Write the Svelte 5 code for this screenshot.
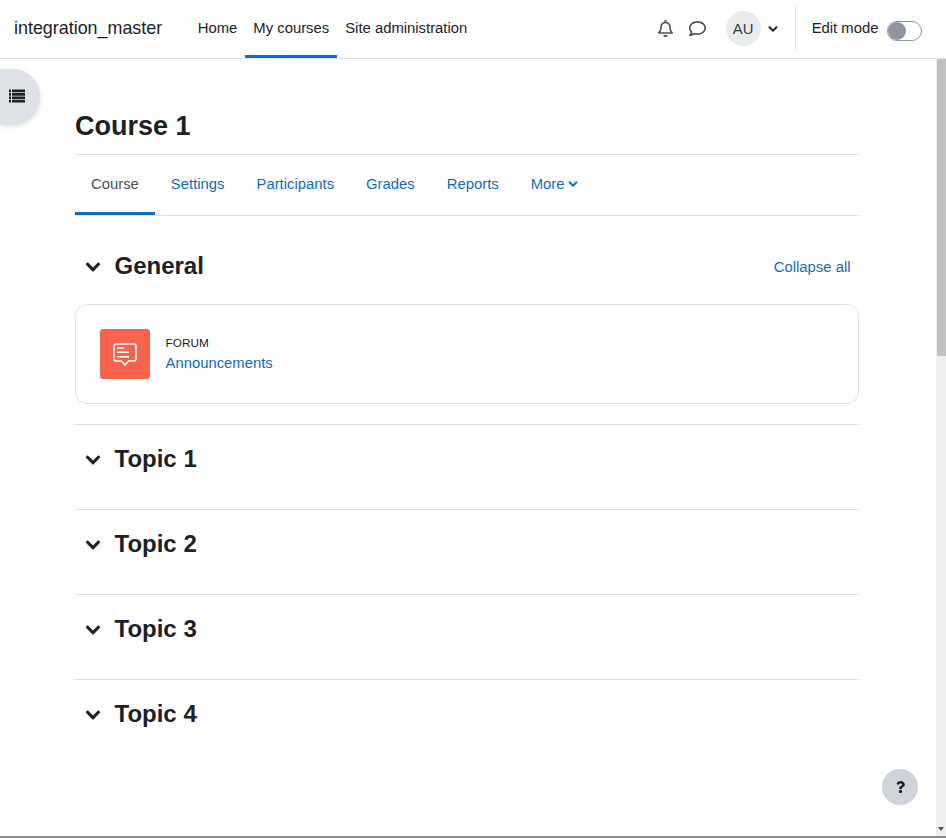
<script lang="ts">
  const navItems = ["Home", "My courses", "Site administration"];
  const tabs = ["Course", "Settings", "Participants", "Grades", "Reports"];
  const topics = ["Topic 1", "Topic 2", "Topic 3", "Topic 4"];
</script>

{#snippet chevron(size: number)}
  <svg class="chevron" width={size} height={size} viewBox="0 0 448 512" aria-hidden="true">
    <path fill="currentColor" stroke="currentColor" stroke-width="28" d="M207.029 381.476L12.686 187.132c-9.373-9.373-9.373-24.569 0-33.941l22.667-22.667c9.357-9.357 24.522-9.375 33.901-.04L224 284.505l154.745-154.021c9.379-9.335 24.544-9.317 33.901.04l22.667 22.667c9.373 9.373 9.373 24.569 0 33.941L240.971 381.476c-9.373 9.372-24.569 9.372-33.942 0z" />
  </svg>
{/snippet}

<div class="window">
  <header class="navbar">
    <span class="brand">integration_master</span>
    <nav class="primary">
      {#each navItems as item}
        <span class="nav-item" class:active={item === "My courses"}>{item}</span>
      {/each}
    </nav>
    <div class="usernav">
      <svg class="bell" width="15" height="17" viewBox="0 0 448 512" aria-hidden="true">
        <path fill="#495057" d="M439.39 362.29c-19.32-20.76-55.47-51.99-55.47-154.29 0-77.7-54.48-139.9-127.94-155.16V32c0-17.67-14.32-32-31.98-32s-31.98 14.33-31.98 32v20.84C118.56 68.1 64.08 130.3 64.08 208c0 102.3-36.15 133.53-55.47 154.29-6 6.45-8.66 14.16-8.61 21.71.11 16.4 12.98 32 32.1 32h383.8c19.12 0 32-15.6 32.1-32 .05-7.55-2.61-15.27-8.61-21.71zM67.53 368c21.22-27.97 44.42-74.33 44.53-159.42 0-.2-.06-.38-.06-.58 0-61.86 50.14-112 112-112s112 50.14 112 112c0 .2-.06.38-.06.58.11 85.1 23.31 131.46 44.53 159.42H67.53zM224 512c35.32 0 63.97-28.65 63.97-64H160.03c0 35.35 28.65 64 63.97 64z" />
      </svg>
      <svg class="chat" width="17" height="17" viewBox="0 0 512 512" aria-hidden="true">
        <path fill="#495057" d="M256 32C114.6 32 0 125.1 0 240c0 47.6 19.9 91.2 52.9 126.3C38 405.7 7 439.1 6.500 439.500c-6.600 7-8.400 17.200-4.600 26S14.400 480 24 480c61.500 0 110-25.700 139.100-46.300C192 442.800 223.200 448 256 448c141.400 0 256-93.100 256-208S397.400 32 256 32zm0 368c-26.700 0-53.100-4.100-78.400-12.100l-22.700-7.200-19.500 13.800c-14.300 10.100-33.900 21.400-57.500 29 7.300-12.100 14.400-25.700 19.900-40.200l10.600-28.100-20.600-21.800C69.700 314.100 48 282.200 48 240c0-88.200 93.300-160 208-160s208 71.800 208 160-93.300 160-208 160z" />
      </svg>
      <span class="avatar">AU</span>
      <span class="user-caret">{@render chevron(10)}</span>
      <span class="divider"></span>
      <span class="edit-label">Edit mode</span>
      <span class="switch"><span class="knob"></span></span>
    </div>
  </header>

  <div class="body-row">
    <main class="page">
      <div class="container">
        <h1>Course 1</h1>
        <div class="tabs">
          {#each tabs as tab}
            <span class="tab" class:current={tab === "Course"}>{tab}</span>
          {/each}
          <span class="tab more">More {@render chevron(10)}</span>
        </div>

        <section class="general">
          <div class="section-head">
            <span class="section-caret">{@render chevron(16)}</span>
            <h2>General</h2>
            <span class="collapse">Collapse all</span>
          </div>
          <div class="card">
            <div class="forum-icon">
              <svg width="26" height="26" viewBox="0 0 26 26" aria-hidden="true">
                <path d="M4.500 3h17a2.500 2.500 0 0 1 2.500 2.500v12a2.500 2.500 0 0 1-2.500 2.500h-5L13 24l-3.500-4h-5A2.500 2.500 0 0 1 2 17.500v-12A2.500 2.500 0 0 1 4.500 3Z" fill="none" stroke="#fff" stroke-width="1.600" />
                <path d="M5 7h7M5 11.300h12M5 15.700h12" fill="none" stroke="#fff" stroke-width="1.500" />
              </svg>
            </div>
            <div class="activity">
              <span class="type">FORUM</span>
              <span class="name">Announcements</span>
            </div>
          </div>
        </section>

        {#each topics as topic}
          <section class="topic">
            <span class="section-caret">{@render chevron(16)}</span>
            <h2>{topic}</h2>
          </section>
        {/each}
      </div>

      <div class="drawer-toggle">
        <svg width="16" height="14" viewBox="0 0 16 14" aria-hidden="true">
          <path d="M0 .5h2v2.700H0zM0 4h2v2.700H0zM0 7.500h2v2.700H0zM0 11h2v2.500H0z" fill="#1d2125" />
          <path d="M3 .5h13v2.700H3zM3 4h13v2.700H3zM3 7.500h13v2.700H3zM3 11h13v2.500H3z" fill="#1d2125" />
        </svg>
      </div>
      <div class="help">
        <svg width="9" height="12" viewBox="0 0 384 512" aria-hidden="true">
          <path fill="#1d2125" d="M202.021 0C122.202 0 70.503 32.703 29.914 91.026c-7.363 10.58-5.093 25.086 5.178 32.874l43.138 32.709c10.373 7.865 25.132 6.026 33.253-4.148 25.049-31.381 43.63-49.449 82.757-49.449 30.764 0 68.816 19.799 68.816 49.631 0 22.552-18.617 34.134-48.993 51.164-35.423 19.86-82.299 44.576-82.299 106.405V320c0 13.255 10.745 24 24 24h72.471c13.255 0 24-10.745 24-24v-5.773c0-42.86 125.268-44.645 125.268-160.627C377.504 66.256 286.902 0 202.021 0zM192 373.459c-38.196 0-69.271 31.075-69.271 69.271 0 38.195 31.075 69.27 69.271 69.27s69.271-31.075 69.271-69.271-31.075-69.27-69.271-69.27z" />
        </svg>
      </div>
    </main>

    <div class="scrollbar">
      <span class="thumb"></span>
      <span class="spacer"></span>
      <span class="arrow"></span>
    </div>
  </div>
  <div class="bottom-edge"></div>
</div>

<style>
  :global(body) {
    margin: 0;
    background: #fff;
    overflow: hidden;
  }

  .window {
    display: flex;
    flex-direction: column;
    height: 838px;
    font-family: "Liberation Sans", Arial, sans-serif;
    font-size: 14.85px;
    color: #1d2125;
    overflow: hidden;
  }

  .navbar {
    display: flex;
    align-items: center;
    flex: none;
    height: 58px;
    padding-left: 14px;
    border-bottom: 1px solid #dee2e6;
  }

  .brand {
    font-size: 17.9px;
    margin: 0 27.500px 1px 0;
  }

  .primary {
    display: flex;
    height: 100%;
  }

  .nav-item {
    display: flex;
    align-items: center;
    height: 55px;
    padding: 0 8px;
    border-bottom: 3px solid transparent;
  }

  .nav-item.active {
    border-bottom-color: #0f6cbf;
  }

  .usernav {
    display: flex;
    align-items: center;
    box-sizing: border-box;
    margin-left: auto;
    height: 100%;
    padding-bottom: 1px;
  }

  .bell {
    margin-right: 16px;
  }

  .chat {
    margin-right: 20px;
  }

  .avatar {
    display: flex;
    align-items: center;
    justify-content: center;
    width: 35px;
    height: 35px;
    border-radius: 50%;
    background: #e9ecef;
    color: #343a40;
    margin-right: 7px;
  }

  .user-caret {
    display: flex;
    margin-right: 17px;
  }

  .divider {
    width: 1px;
    height: 45px;
    background: #dee2e6;
    margin-right: 16px;
  }

  .edit-label {
    margin: 0 8.500px 2px 0;
  }

  .switch {
    position: relative;
    box-sizing: border-box;
    width: 35px;
    height: 20px;
    border: 1px solid #8f959e;
    border-radius: 10px;
    margin: 5px 24px 0 0;
  }

  .knob {
    position: absolute;
    left: 0;
    top: 0;
    width: 18px;
    height: 18px;
    border-radius: 50%;
    background: #8f959e;
  }

  .body-row {
    display: flex;
    flex: 1;
    min-height: 0;
  }

  .page {
    position: relative;
    flex: 1;
    min-width: 0;
  }

  .container {
    width: 784px;
    margin-left: 75px;
  }

  h1 {
    margin: 0;
    padding-top: 50px;
    height: 45px;
    font-size: 27px;
    line-height: 34px;
    font-weight: 700;
  }

  .tabs {
    display: flex;
    height: 60px;
    border-top: 1px solid #dee2e6;
    border-bottom: 1px solid #dee2e6;
  }

  .tab {
    display: flex;
    align-items: center;
    gap: 3px;
    box-sizing: border-box;
    height: 60px;
    padding: 1px 16px 0;
    color: #0f6cbf;
    border-bottom: 3px solid transparent;
  }

  .tab.current {
    color: #495057;
    border-bottom-color: #0f6cbf;
  }

  .general {
    padding: 28px 0 20px;
  }

  .section-head {
    display: flex;
    align-items: center;
    height: 44px;
    margin-bottom: 16px;
  }

  .section-caret {
    display: flex;
    margin: 0 13.500px 0 10px;
  }

  .section-head .section-caret {
    margin-top: 1px;
  }

  .section-head h2 {
    margin-top: -2px;
  }

  h2 {
    margin: 0;
    font-size: 24px;
    line-height: 29px;
    font-weight: 700;
  }

  .collapse {
    margin-left: auto;
    margin-right: 8.500px;
    padding-top: 2px;
    color: #0f6cbf;
  }

  .card {
    display: flex;
    align-items: center;
    gap: 15.500px;
    box-sizing: border-box;
    height: 100px;
    padding: 0 24px;
    border: 1px solid #dee2e6;
    border-radius: 12px;
  }

  .forum-icon {
    display: flex;
    align-items: center;
    justify-content: center;
    width: 50px;
    height: 50px;
    border-radius: 3px;
    background: #f7634d;
  }

  .activity {
    display: flex;
    flex-direction: column;
    gap: 4px;
    padding-top: 1px;
  }

  .type {
    font-size: 11.8px;
    line-height: 14px;
    margin-top: -1px;
  }

  .name {
    color: #0f6cbf;
    line-height: 18px;
  }

  .topic {
    display: flex;
    align-items: flex-start;
    box-sizing: border-box;
    height: 85px;
    padding-top: 19px;
    border-top: 1px solid #dee2e6;
  }

  .topic .section-caret {
    margin-top: 8px;
  }

  .drawer-toggle {
    position: absolute;
    left: 0;
    top: 10px;
    display: flex;
    align-items: center;
    justify-content: center;
    box-sizing: border-box;
    width: 40px;
    height: 55px;
    padding: 0 6px 2px 0;
    background: #dee2e6;
    border-radius: 0 28px 28px 0;
    box-shadow: 0 2px 5px rgba(0, 0, 0, 0.15);
  }

  .help {
    position: absolute;
    left: 882px;
    top: 710px;
    display: flex;
    align-items: center;
    justify-content: center;
    width: 36px;
    height: 36px;
    border-radius: 50%;
    background: #ced4da;
  }

  .scrollbar {
    display: flex;
    flex-direction: column;
    flex: none;
    width: 10px;
    background: #f0f0f0;
  }

  .thumb {
    height: 297px;
    margin-left: 1px;
    background: #c1c1c1;
  }

  .spacer {
    flex: 1;
  }

  .arrow {
    align-self: center;
    width: 0;
    height: 0;
    margin-bottom: 5px;
    border-left: 3.500px solid transparent;
    border-right: 3.500px solid transparent;
    border-top: 4px solid #505050;
  }

  .bottom-edge {
    flex: none;
    height: 2px;
    background: #8c8c8c;
  }
</style>
